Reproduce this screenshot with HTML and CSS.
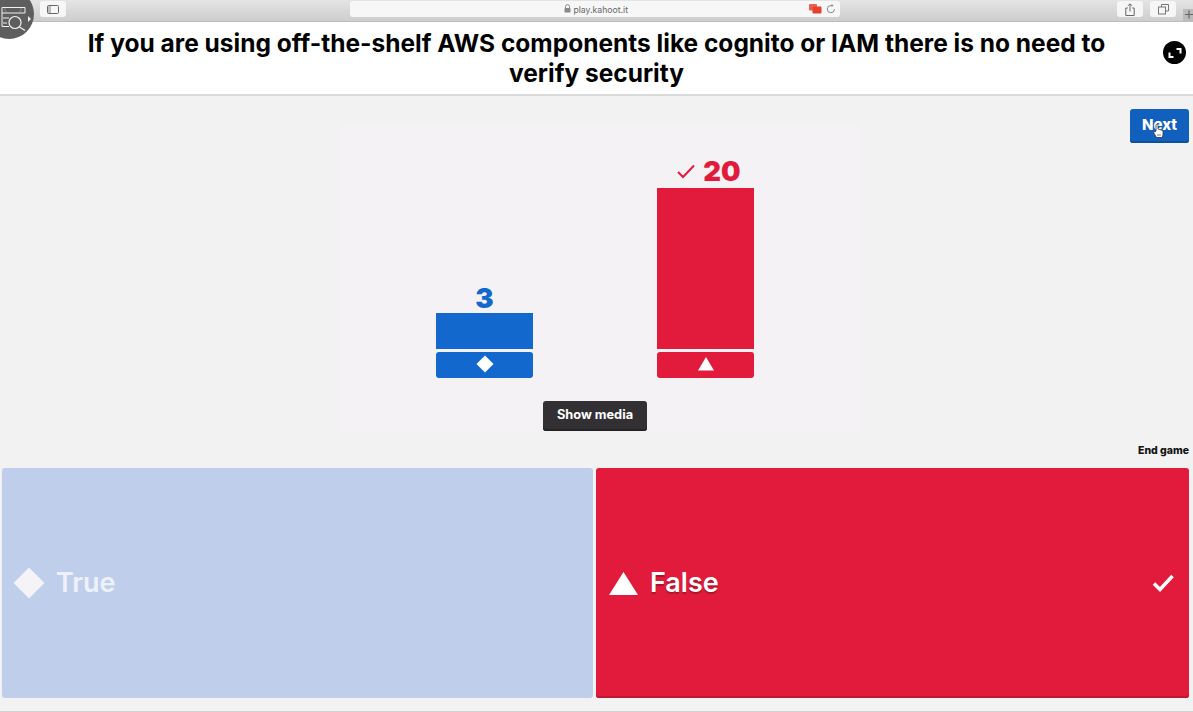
FILE: index.html
```html
<!DOCTYPE html>
<html lang="en">
<head>
    <meta charset="UTF-8">
    <title>Kahoot!</title>
    <link rel="stylesheet" href="styles.css">
</head>
<body>
    <div class="browserbar">
        <div class="bar-btn sidebar-btn">
            <svg width="12" height="9" viewBox="0 0 12 9"><rect x="0.5" y="0.5" width="11" height="8" rx="1" fill="none" stroke="#666"/><rect x="1" y="1" width="3" height="7" fill="#bbb"/></svg>
        </div>
        <div class="address">
            <span class="address-text">
                <svg width="7" height="9" viewBox="0 0 7 9"><path d="M1.500 4V2.600a2 2 0 0 1 4 0V4" fill="none" stroke="#888"/><rect x="0.500" y="4" width="6" height="4.500" rx="0.700" fill="#888"/></svg>
                play.kahoot.it
            </span>
            <span class="address-icons">
                <svg width="13" height="10" viewBox="0 0 13 10"><rect x="0" y="0" width="8" height="6.500" rx="1" fill="#e8604f"/><rect x="3.500" y="2.500" width="9" height="7" rx="1" fill="#e8402f"/></svg>
                <svg width="10" height="10" viewBox="0 0 10 10"><path d="M8.500 5.200A3.600 3.600 0 1 1 5 1.500h1.500" fill="none" stroke="#888"/><path d="M5.600 0l2 1.500-2 1.500z" fill="#888"/></svg>
            </span>
        </div>
        <div class="bar-right">
            <div class="bar-btn square-btn">
                <svg width="10" height="13" viewBox="0 0 10 13"><path d="M2.800 5H.8v7.500h8.400V5h-2M5 8.500V1M3 2.800 5 .8l2 2" fill="none" stroke="#666"/></svg>
            </div>
            <div class="bar-btn square-btn">
                <svg width="11" height="11" viewBox="0 0 11 11"><path d="M3.500 3V.5h7V7H8" fill="none" stroke="#777"/><rect x="0.500" y="3" width="7" height="7" fill="none" stroke="#777"/></svg>
            </div>
            <div class="new-tab">
                <svg width="10" height="12" viewBox="0 0 10 12"><path d="M2 5.500h8M6 1.500v8" stroke="#666" stroke-width="1.200"/></svg>
            </div>
        </div>
    </div>

    <div class="question">
        <h1>If you are using off-the-shelf AWS components like cognito or IAM there is no need to verify security</h1>
        <div class="fullscreen">
            <svg width="14" height="14" viewBox="0 0 14 14"><path d="M8.500 3h4v4.500M5.500 11h-4V6.500" fill="none" stroke="#fff" stroke-width="2"/></svg>
        </div>
    </div>

    <div class="main">
        <div class="next-row">
            <button class="next">
                Next
                <svg class="hand" width="11" height="15" viewBox="0 0 11 15"><path d="M3 8V2.200a1 1 0 0 1 2 0V6l4 1.200a1.500 1.500 0 0 1 1 1.500V12l-1 2.500H3.500L.8 10a1 1 0 0 1 1.500-1.200z" fill="#fff" stroke="#333" stroke-width="0.800"/><path d="M5 11v2M7 11v2" stroke="#555" stroke-width="0.800"/></svg>
            </button>
        </div>
        <div class="stage">
            <div class="chart">
                <div class="column">
                    <div class="count blue-text">3</div>
                    <div class="bar blue small"></div>
                    <div class="label blue">
                        <svg width="18" height="18" viewBox="0 0 18 18"><path d="M9 .5 17.500 9 9 17.500.5 9z" fill="#fff"/></svg>
                    </div>
                </div>
                <div class="column">
                    <div class="count red-text">
                        <svg class="count-check" width="18" height="15" viewBox="0 0 18 15"><path d="M1 8l5 5L17 1.500" fill="none" stroke="#e21b3c" stroke-width="2"/></svg>
                        20
                    </div>
                    <div class="bar red tall"></div>
                    <div class="label red">
                        <svg width="16" height="14" viewBox="0 0 16 14"><path d="M8 0 16 13.500H0z" fill="#fff"/></svg>
                    </div>
                </div>
            </div>
            <div class="media-row">
                <button class="show-media">Show media</button>
            </div>
        </div>
        <div class="end-row">End game</div>
        <div class="answers">
            <div class="answer answer-true">
                <svg width="32" height="32" viewBox="0 0 32 32"><path d="M16 .5 31.500 16 16 31.500.5 16z" fill="#f3f3f8"/></svg>
                <span>True</span>
            </div>
            <div class="answer answer-false">
                <svg width="29" height="23" viewBox="0 0 29 23"><path d="M14.500 0 29 23H0z" fill="#fff"/></svg>
                <span>False</span>
                <svg class="answer-check" width="22" height="18" viewBox="0 0 22 18"><path d="M2 9.500l6 6L20.500 2" fill="none" stroke="#fff" stroke-width="3.500"/></svg>
            </div>
        </div>
    </div>

    <!-- recorder badge sits over the corner of the window -->
    <div class="recorder">
        <svg width="28" height="32" viewBox="0 0 28 32"><path d="M7 7 4 9.500 7 12M19 7l3 2.500L19 12" fill="none" stroke="#888"/><path d="M2 7.500h23V13M2 7.500V26.500h7M2 13h23M3 18h6M3 23h4" fill="none" stroke="#f0f0f0"/><circle cx="15" cy="22.500" r="6" fill="none" stroke="#f0f0f0" stroke-width="1.200"/><path d="M19.500 27l5.500 3.500" stroke="#f0f0f0" stroke-width="1.400"/></svg>
        <span class="recorder-arrow"></span>
    </div>
</body>
</html>
```

FILE: styles.css
```css
* {
    box-sizing: border-box;
}

html, body {
    height: 100%;
}

body {
    margin: 0;
    background-color: #f2f2f2;
    font-family: "Inter", "Liberation Sans", sans-serif;
    overflow: hidden;
    position: relative;
}

.browserbar {
    display: flex;
    align-items: flex-start;
    height: 22px;
    padding: 1px 0 0 40px;
    background: linear-gradient(#e4e4e4, #cdcdcd);
    border-bottom: 1px solid #bdbdbd;
}

.bar-btn {
    display: flex;
    align-items: center;
    justify-content: center;
    height: 16px;
    background-color: #f6f6f6;
    border-radius: 3px;
}

.sidebar-btn {
    width: 26px;
}

.address {
    display: flex;
    align-items: center;
    width: 490px;
    height: 16px;
    margin-left: 284px;
    background-color: #f7f7f7;
    border-radius: 3px;
}

.address-text {
    flex: 1;
    padding-left: 33px;
    font-size: 8.700px;
    color: #666;
    text-align: center;
}

.address-icons {
    display: flex;
    align-items: center;
    gap: 4px;
    padding-right: 4px;
}

.bar-right {
    display: flex;
    align-items: flex-start;
    margin-left: auto;
}

.square-btn {
    width: 26px;
    margin-right: 7px;
}

.new-tab {
    display: flex;
    width: 10px;
    height: 12px;
    margin-top: 8px;
    background-color: #bbb;
    overflow: hidden;
}

.question {
    display: flex;
    align-items: center;
    justify-content: center;
    height: 74px;
    padding: 0 80px;
    background-color: #fff;
    border-bottom: 2px solid #d9d9d9;
    position: relative;
}

.question h1 {
    margin: 0;
    font-size: 24.500px;
    line-height: 30px;
    font-weight: 700;
    color: #000;
    text-align: center;
}

.fullscreen {
    display: flex;
    align-items: center;
    justify-content: center;
    width: 23px;
    height: 23px;
    border-radius: 50%;
    background-color: #000;
    position: absolute;
    right: 7px;
    top: 19px;
}

.main {
    display: flex;
    flex-direction: column;
    height: 616px;
    padding: 0 4px 13px 2px;
    border-bottom: 1px solid #d2d2d2;
}

.next-row {
    display: flex;
    justify-content: flex-end;
    padding-top: 13px;
    height: 47px;
}

.next {
    width: 59px;
    height: 34px;
    padding: 0 0 3px;
    border: none;
    border-radius: 3px;
    background-color: #1260be;
    box-shadow: inset 0 -2px 0 #0e4f9e;
    color: #fff;
    font-family: inherit;
    font-size: 15px;
    font-weight: 800;
    position: relative;
}

.hand {
    position: absolute;
    left: 23px;
    top: 14px;
}

/* the washed out media picture behind the chart */
.stage {
    width: 522px;
    margin: -17px 0 0 336px;
    padding: 17px 8px 0 0;
    background-color: #f4f2f4;
    box-shadow: 0 0 14px #f4f2f4;
}

.chart {
    display: flex;
    justify-content: center;
    gap: 124px;
    height: 235px;
}

.column {
    display: flex;
    flex-direction: column;
    justify-content: flex-end;
    width: 97px;
}

.count {
    display: flex;
    align-items: center;
    justify-content: center;
    gap: 8px;
    height: 30px;
    font-size: 27.500px;
    font-weight: 900;
}

.blue-text {
    color: #1368ce;
    padding-bottom: 1px;
}

.red-text {
    color: #e21b3c;
    padding: 0 0 4px 7px;
}

.bar {
    margin-bottom: 3px;
}

.small {
    height: 36px;
}

.tall {
    height: 161px;
}

.blue {
    background-color: #1368ce;
}

.red {
    background-color: #e21b3c;
}

.label {
    display: flex;
    align-items: center;
    justify-content: center;
    height: 26px;
    padding-bottom: 2px;
    border-radius: 3px;
}

.media-row {
    display: flex;
    justify-content: center;
    height: 53px;
    padding-top: 23px;
}

.show-media {
    width: 104px;
    height: 30px;
    padding: 0 0 3px;
    border: none;
    border-radius: 3px;
    background-color: #333034;
    box-shadow: inset 0 -2px 0 #262326;
    color: #fff;
    font-family: inherit;
    font-size: 12.800px;
    font-weight: 700;
}

.end-row {
    height: 37px;
    padding-top: 13px;
    text-align: right;
    font-size: 10.500px;
    font-weight: 800;
    color: #111;
}

.answers {
    display: flex;
    gap: 3px;
    flex: 1;
}

.answer {
    display: flex;
    align-items: center;
    flex: 1;
    border-radius: 3px;
    font-size: 27px;
    font-weight: 600;
    color: #fff;
}

.answer span {
    margin-bottom: 2px;
}

.answer-true {
    gap: 11px;
    padding-left: 11px;
    background-color: #bfcfeb;
    color: #eef1f9;
}

.answer-false {
    gap: 12px;
    padding-left: 13px;
    background-color: #e21b3c;
    box-shadow: inset 0 -2px 0 #c01733;
    text-shadow: 0 2px 1px rgba(0, 0, 0, 0.25);
}

.answer-check {
    margin-left: auto;
    margin-right: 15px;
}

.recorder {
    position: absolute;
    left: -16px;
    top: -11px;
    width: 50px;
    height: 50px;
    padding: 11px 0 0 16px;
    border-radius: 50%;
    background-color: #5e5e5e;
}

.recorder-arrow {
    position: absolute;
    left: 44px;
    top: 27px;
    border-left: 3px solid #eee;
    border-top: 3px solid transparent;
    border-bottom: 3px solid transparent;
}
```
